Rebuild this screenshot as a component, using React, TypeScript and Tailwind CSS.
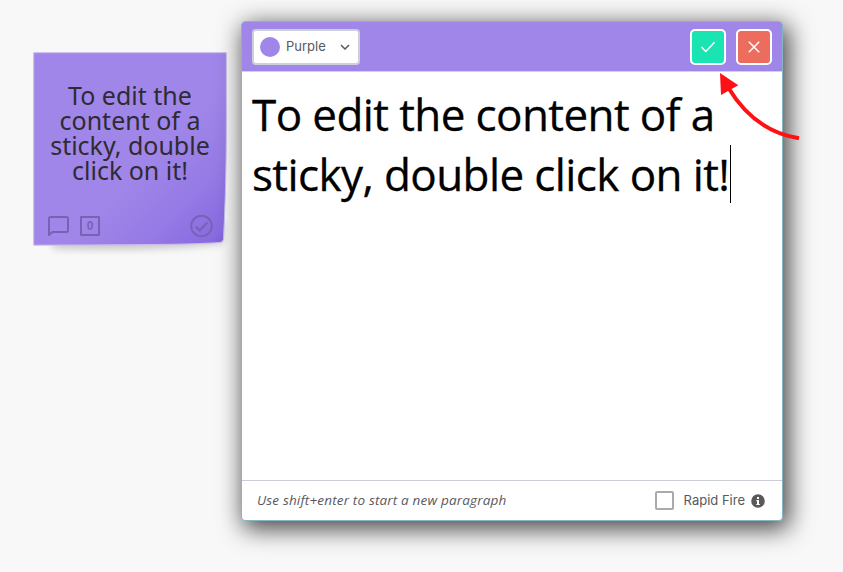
import React from "react";

function Sticky() {
  return (
    <div className="relative mt-[52px] h-[194px] w-[194px] shrink-0">
      <svg className="absolute inset-0 overflow-visible" width="194" height="194" viewBox="0 0 194 194">
        <defs>
          <linearGradient id="paper" gradientUnits="userSpaceOnUse" x1="85" y1="85" x2="194" y2="194">
            <stop offset="0.25" stopColor="#a086e8" />
            <stop offset="0.6" stopColor="#967ae5" />
            <stop offset="0.9" stopColor="#886be0" />
            <stop offset="1" stopColor="#7c5cd8" />
          </linearGradient>
          <filter id="soft" x="-20%" y="-20%" width="140%" height="140%">
            <feGaussianBlur stdDeviation="4" />
          </filter>
        </defs>
        <path d="M16 170H189V191Q120 199 20 196Z" fill="#000" opacity="0.22" filter="url(#soft)" />
        <path
          d="M.7.700H193.300V70C193.300 130 191.500 165 190.500 187Q190 190.300 187 190.500C150 193 90 192.700 .7 193.200Z"
          fill="url(#paper)"
          stroke="#cbbdf0"
          strokeWidth="1"
        />
      </svg>
      <div className="relative flex h-full flex-col justify-between pt-[31px] pb-[8px]">
        <p className="text-center font-['Noto_Sans',sans-serif] text-[25px] leading-[25px] text-[#2e2b33]">
          To edit the
          <br />
          content of a
          <br />
          sticky, double
          <br />
          click on it!
        </p>
        <div className="flex items-center pr-[13px] pl-[15px] text-[#7b61b5]">
          <svg width="21" height="21" viewBox="0 0 21 21" fill="none" stroke="currentColor" strokeWidth="2">
            <path d="M1 19V2.500Q1 1 2.500 1H18.500Q20 1 20 2.500V14.500Q20 16 18.500 16H4.500Z" strokeLinejoin="round" />
          </svg>
          <span className="ml-[11px] flex h-[20px] w-[20px] items-center justify-center rounded-[1px] border-2 border-current font-['Liberation_Sans',sans-serif] text-[12px] leading-none font-bold">
            0
          </span>
          <svg className="ml-auto" width="24" height="24" viewBox="0 0 24 24" fill="none" stroke="currentColor" strokeWidth="2">
            <circle cx="11.500" cy="12" r="10.300" />
            <path d="M5.800 12.500l3.900 4 7.600-8" />
          </svg>
        </div>
      </div>
    </div>
  );
}

function Editor() {
  return (
    <div className="relative mt-[21px] ml-[14px] flex h-[500px] w-[542px] shrink-0 flex-col rounded-[4px] border border-[#86b6c3] bg-white text-[#58595b] shadow-[4px_6px_24px_2px_rgba(0,0,0,0.72)]">
      <header className="flex h-[50px] shrink-0 items-center rounded-t-[3px] border-b border-[#d5cfec] bg-[#a086e8] px-[10px]">
        <button className="flex h-[36px] w-[108px] items-center rounded-[4px] border-2 border-[#cbd0da] bg-white pr-[8px] pl-[6px]">
          <span className="h-[20px] w-[20px] rounded-full bg-[#a086e8]" />
          <span className="ml-[6px] font-['Inter',sans-serif] text-[13px] leading-none">Purple</span>
          <svg className="ml-auto" width="10" height="6" viewBox="0 0 10 6" fill="none" stroke="currentColor" strokeWidth="1.500">
            <path d="M1 1l4 4 4-4" />
          </svg>
        </button>
        <button className="ml-auto flex h-[36px] w-[36px] items-center justify-center rounded-[5px] border-2 border-white bg-[#1ae5b2] text-white">
          <svg width="16" height="12" viewBox="0 0 16 12" fill="none" stroke="currentColor" strokeWidth="1.500">
            <path d="M1.500 6l4.300 4.500L14.500 1.200" />
          </svg>
        </button>
        <button className="ml-[10px] flex h-[36px] w-[36px] items-center justify-center rounded-[5px] border-2 border-white bg-[#ec6d5e] text-white">
          <svg width="12" height="12" viewBox="0 0 12 12" fill="none" stroke="currentColor" strokeWidth="1.500">
            <path d="M.8.8l10.400 10.400M11.200.8L.8 11.200" />
          </svg>
        </button>
      </header>
      <div className="flex-1 px-[10px] pt-[12px] font-['Open_Sans',sans-serif] text-[44px] leading-[60px] tracking-[-0.6px] whitespace-nowrap text-black [-webkit-text-stroke:0.3px_black]">
        <div>To edit the content of a</div>
        <div className="flex items-center">
          sticky, double click on it!
          <span className="ml-px h-[58px] w-px bg-black" />
        </div>
      </div>
      <footer className="flex h-[40px] shrink-0 items-center border-t border-[#cccdd6] pr-[17px] pl-[15px]">
        <em className="font-['Open_Sans',sans-serif] text-[13.500px] tracking-[0.17px] whitespace-nowrap">
          Use shift+enter to start a new paragraph
        </em>
        <span className="ml-auto h-[19px] w-[19px] rounded-[2px] border-2 border-[#aaaaaa] bg-white" />
        <span className="ml-[10px] font-['Inter',sans-serif] text-[13px]">Rapid Fire</span>
        <svg className="ml-[6px]" width="14" height="14" viewBox="0 0 14 14">
          <circle cx="7" cy="7" r="6.800" fill="#58595b" />
          <path d="M6 3h2v2H6zM5.300 6H8v4h.8v1H5.300v-1H6V7h-.7z" fill="#fff" />
        </svg>
      </footer>
    </div>
  );
}

export default function App() {
  return (
    <main className="relative flex h-[572px] w-[843px] items-start overflow-hidden bg-[#f8f8f8] pl-[33px]">
      <Sticky />
      <Editor />
      <svg className="pointer-events-none absolute top-[65px] left-[710px]" width="100" height="85" viewBox="0 0 100 85">
        <path d="M18.500 23Q45 66.500 89 73.300" fill="none" stroke="#ff1014" strokeWidth="4" />
        <path d="M10 8L28.300 20.300L11 30Z" fill="#ff1014" />
      </svg>
    </main>
  );
}
